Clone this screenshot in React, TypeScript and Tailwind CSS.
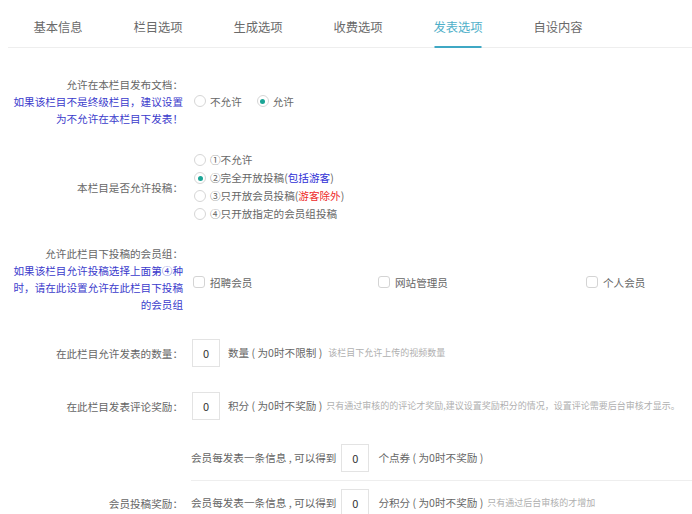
import React from "react";

const tabs = ["基本信息", "栏目选项", "生成选项", "收费选项", "发表选项", "自设内容"];

function Radio({ checked }: { checked?: boolean }) {
  return (
    <span className="w-[12px] h-[12px] rounded-full border border-[#d6d6d6] bg-white flex items-center justify-center shrink-0">
      {checked && <span className="w-[5px] h-[5px] rounded-full bg-[#1ba596]" />}
    </span>
  );
}

function Check() {
  return <span className="w-[12px] h-[12px] rounded-[3px] border border-[#d4d4d4] bg-white shrink-0" />;
}

function Box() {
  return (
    <span className="w-[28px] h-[28px] border border-[#e3e3e3] flex items-center justify-center text-[#333] text-[11px] shrink-0">
      0
    </span>
  );
}

function Label({ children }: { children: React.ReactNode }) {
  return <div className="w-[183px] shrink-0 text-right leading-[17px]">{children}</div>;
}

export default function App() {
  return (
    <div className="w-[692px] h-[514px] overflow-hidden bg-white font-['Noto_Sans_CJK_SC','Noto_Sans',sans-serif] text-[10.6px] text-[#666]">
      {/* Tabs */}
      <div className="ml-[8px] flex h-[48px] border-b border-[#eeeeee]">
        {tabs.map((t, i) => (
          <div key={t} className="relative w-[100px] flex justify-center pt-[19px]">
            <span className={"text-[12.3px] leading-[17px] " + (i === 4 ? "text-[#4fb0c9]" : "text-[#6a6a6a]")}>{t}</span>
            {i === 4 && (
              <span className="absolute bottom-[-1px] left-1/2 -translate-x-1/2 w-[47px] h-[2px] bg-[#3fa8c4]" />
            )}
          </div>
        ))}
      </div>

      {/* Row 1 */}
      <div className="mt-[28px] flex items-center">
        <Label>
          允许在本栏目发布文档：
          <br />
          <span className="text-[#3b3bcc]">
            如果该栏目不是终级栏目，建议设置
            <br />
            为不允许在本栏目下发表！
          </span>
        </Label>
        <div className="ml-[11px] flex items-center">
          <Radio />
          <span className="ml-[4px] mr-[15px]">不允许</span>
          <Radio checked />
          <span className="ml-[4px]">允许</span>
        </div>
      </div>

      {/* Row 2 */}
      <div className="mt-[24px] flex items-center">
        <Label>本栏目是否允许投稿：</Label>
        <div className="ml-[11px] flex flex-col leading-[18px]">
          <div className="flex items-center">
            <Radio />
            <span className="ml-[4px]">①不允许</span>
          </div>
          <div className="flex items-center">
            <Radio checked />
            <span className="ml-[4px]">
              ②完全开放投稿(<span className="text-[#2f2fd6]">包括游客</span>)
            </span>
          </div>
          <div className="flex items-center">
            <Radio />
            <span className="ml-[4px]">
              ③只开放会员投稿(<span className="text-[#ee2b2b]">游客除外</span>)
            </span>
          </div>
          <div className="flex items-center">
            <Radio />
            <span className="ml-[4px]">④只开放指定的会员组投稿</span>
          </div>
        </div>
      </div>

      {/* Row 3 */}
      <div className="mt-[22px] flex items-center">
        <Label>
          允许此栏目下投稿的会员组：
          <br />
          <span className="text-[#3b3bcc]">
            如果该栏目允许投稿选择上面第④种
            <br />
            时，请在此设置允许在此栏目下投稿
            <br />
            的会员组
          </span>
        </Label>
        <div className="ml-[10px] pt-[7px] flex items-center flex-1">
          <div className="w-[185px] flex items-center">
            <Check />
            <span className="ml-[5px]">招聘会员</span>
          </div>
          <div className="w-[208px] flex items-center">
            <Check />
            <span className="ml-[5px]">网站管理员</span>
          </div>
          <div className="flex items-center">
            <Check />
            <span className="ml-[5px]">个人会员</span>
          </div>
        </div>
      </div>

      {/* Row 4 */}
      <div className="mt-[26px] flex items-center">
        <Label>在此栏目允许发表的数量：</Label>
        <div className="ml-[9px] flex items-center">
          <Box />
          <span className="ml-[8px]">数量 ( 为0时不限制 )</span>
          <span className="ml-[6px] text-[9px] text-[#b0b0b0]">该栏目下允许上传的视频数量</span>
        </div>
      </div>

      {/* Row 5 */}
      <div className="mt-[25px] flex items-center">
        <Label>在此栏目发表评论奖励：</Label>
        <div className="ml-[9px] flex items-center whitespace-nowrap">
          <Box />
          <span className="ml-[8px]">积分 ( 为0时不奖励 )</span>
          <span className="ml-[4px] text-[9px] text-[#b0b0b0]">
            只有通过审核的的评论才奖励,建议设置奖励积分的情况，设置评论需要后台审核才显示。
          </span>
        </div>
      </div>

      {/* Group */}
      <div className="mt-[16px] flex items-center">
        <Label>会员投稿奖励：</Label>
        <div className="ml-[8px] flex-1 flex flex-col">
          <div className="py-[8px] border-b border-[#eeeeee] flex items-center">
            <span>会员每发表一条信息 , 可以得到</span>
            <span className="ml-[5px]"><Box /></span>
            <span className="ml-[9px]">个点券 ( 为0时不奖励 )</span>
          </div>
          <div className="py-[8px] border-b border-[#eeeeee] flex items-center">
            <span>会员每发表一条信息 , 可以得到</span>
            <span className="ml-[5px]"><Box /></span>
            <span className="ml-[9px]">分积分 ( 为0时不奖励 )</span>
            <span className="ml-[4px] text-[9px] text-[#b0b0b0]">只有通过后台审核的才增加</span>
          </div>
          <div className="py-[8px] flex items-center">
            <span>会员每发表一条信息 , 可以得到</span>
            <span className="ml-[5px]"><Box /></span>
            <span className="ml-[9px]">个金币 ( 为0时不奖励 )</span>
          </div>
        </div>
      </div>
    </div>
  );
}
